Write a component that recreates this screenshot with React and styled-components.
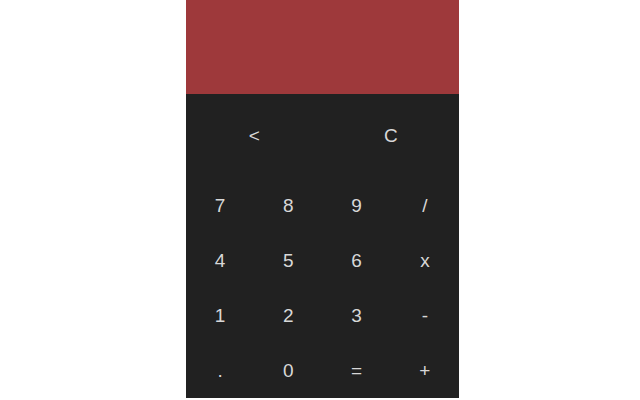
import React from "react";
import styled, { createGlobalStyle } from "styled-components";

const Global = createGlobalStyle`
  html, body { margin: 0; padding: 0; background: #ffffff; }
  body { font-family: "Liberation Sans", Arial, sans-serif; }
`;

const Calculator = styled.div`
  width: 273px;
  height: 398px;
  margin-left: 186px;
  display: flex;
  flex-direction: column;
  background: #212121;
`;

const Display = styled.div`
  height: 94px;
  background: #9e393b;
  flex-shrink: 0;
`;

const Row = styled.div`
  display: grid;
  grid-template-columns: repeat(${(p) => p.$cols}, 1fr);
  grid-auto-rows: ${(p) => p.$rowHeight}px;
`;

const Key = styled.button`
  border: none;
  background: transparent;
  color: #d8d8d8;
  font-family: "Liberation Sans", Arial, sans-serif;
  font-size: 19px;
  font-weight: 400;
  display: flex;
  align-items: center;
  justify-content: center;
  padding: 0;
  cursor: pointer;
`;

const top = ["<", "C"];
const keys = ["7", "8", "9", "/", "4", "5", "6", "x", "1", "2", "3", "-", ".", "0", "=", "+"];

export default function App() {
  return (
    <>
      <Global />
      <Calculator>
        <Display />
        <Row $cols={2} $rowHeight={84}>
          {top.map((k) => (
            <Key key={k}>{k}</Key>
          ))}
        </Row>
        <Row $cols={4} $rowHeight={55}>
          {keys.map((k) => (
            <Key key={k}>{k}</Key>
          ))}
        </Row>
      </Calculator>
    </>
  );
}
